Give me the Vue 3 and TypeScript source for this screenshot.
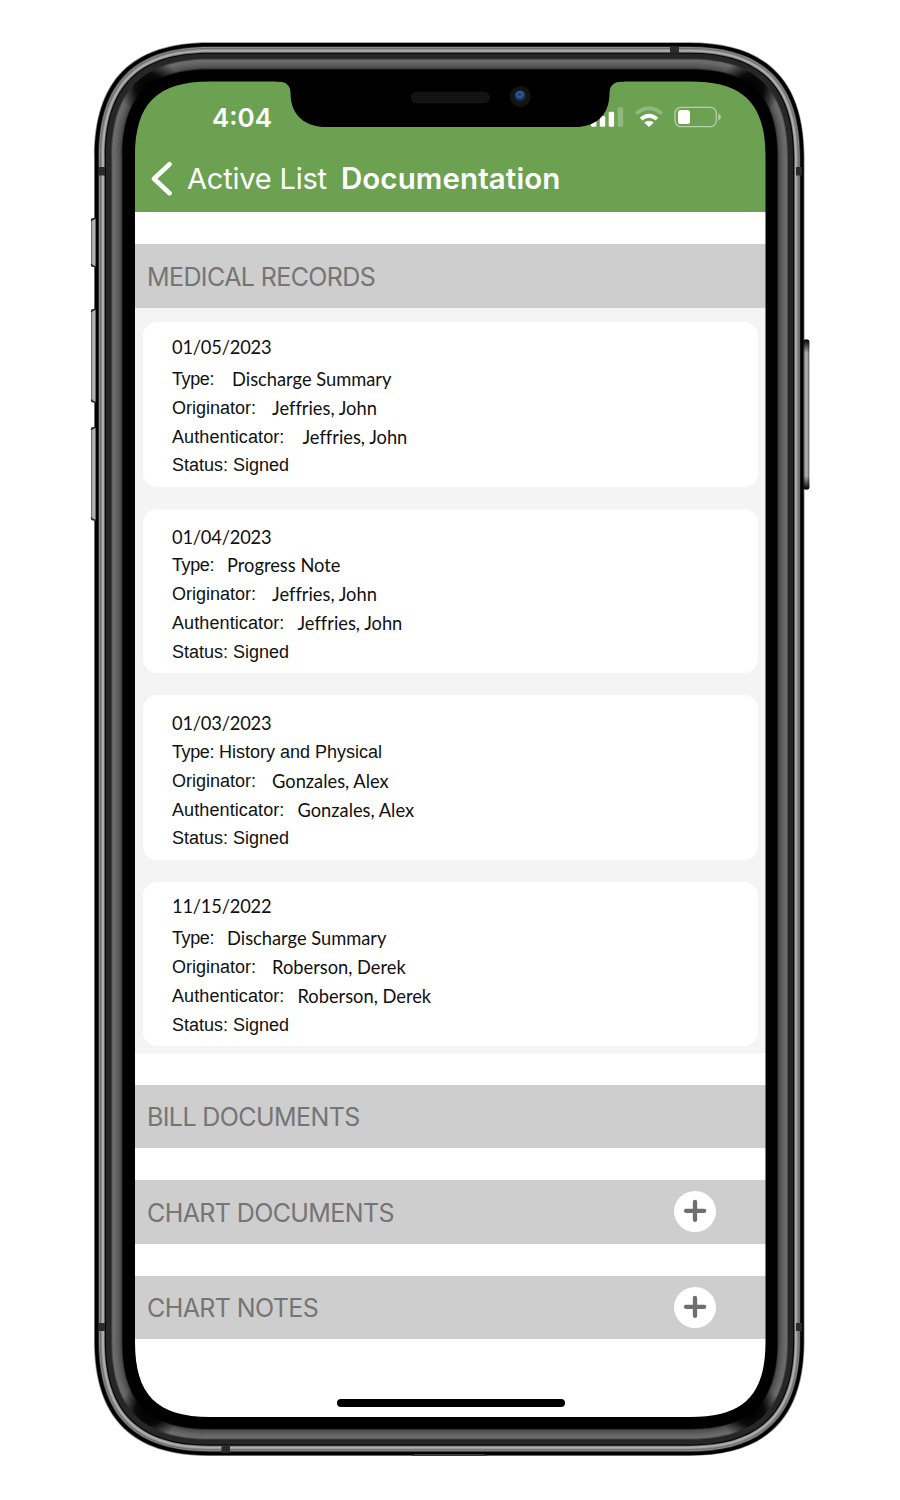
<script setup lang="ts">
interface Doc {
  date: string
  shift: string
  type: string
  typeClass: string
  person: string
  authClass: string
}

const docs: Doc[] = [
  { date: '01/05/2023', shift: 'd0', type: 'Discharge Summary', typeClass: 'wide', person: 'Jeffries, John', authClass: 'wide' },
  { date: '01/04/2023', shift: 'd1', type: 'Progress Note', typeClass: 'mid', person: 'Jeffries, John', authClass: 'mid' },
  { date: '01/03/2023', shift: 'd1', type: 'History and Physical', typeClass: 'plain', person: 'Gonzales, Alex', authClass: 'mid' },
  { date: '11/15/2022', shift: 'd2', type: 'Discharge Summary', typeClass: 'mid', person: 'Roberson, Derek', authClass: 'mid' },
]

// Continuous-corner outline of the phone body, inset by a distance from its edge
function outline(inset: number): string {
  const t = inset / 41
  const l = 94 + inset
  const r = 804.5 - inset + t * 2
  const top = 42.3 + inset * (39.2 / 41)
  const b = 1456 - inset * (39 / 41)
  const a = 115 - 40 * t
  const c = 37.7 - 15.7 * t
  return `M${l} ${top + a}C${l} ${top + c} ${l + c} ${top} ${l + a} ${top}H${r - a}C${r - c} ${top} ${r} ${top + c} ${r} ${top + a}V${b - a}C${r} ${b - c} ${r - c} ${b} ${r - a} ${b}H${l + a}C${l + c} ${b} ${l} ${b - c} ${l} ${b - a}Z`
}

const hole = outline(41)
const layers: [number, string][] = [
  [0, '#8a8a8a'], [0.8, '#000'], [4.2, '#2e2e2e'], [5, '#8a8a8a'], [6, '#6e6e6e'], [7, '#8c8c8c'],
  [8, '#adadad'], [10, '#777'], [10.8, '#060606'], [12, '#262626'], [17.3, '#4a4a4a'], [18.3, '#6c6c6c'],
  [20, '#686868'], [22, '#606060'], [24, '#565656'], [26, '#4a4a4a'], [27.5, '#303030'], [28.4, '#000'],
]
// Each band reaches slightly under the next one so that no seam shows between them
const rings = layers.map(([inset, fill], i) => {
  const next = layers[i + 1]
  return { d: outline(inset) + (next ? outline(next[0] + 1) : hole), fill }
})
const corners = [
  [149, 87], [751, 87], [149, 1412], [751, 1412],
]
</script>

<template>
  <div class="page">
    <div class="screen">
      <header class="top">
        <div class="status">
          <span class="time">4:04</span>
          <svg class="signals" width="136" height="24" viewBox="588 105 136 24">
            <g fill="#fff">
              <rect x="591" y="119" width="5.4" height="7.8" rx="1.4" />
              <rect x="599.8" y="116" width="5.4" height="10.8" rx="1.4" />
              <rect x="608.7" y="111.7" width="5.4" height="15.1" rx="1.4" />
              <rect x="617.7" y="107.3" width="5.4" height="19.5" rx="1.4" opacity=".25" />
              <path d="M649 127l-4.800-4.400q4.800-3.800 9.600 0z" />
              <rect x="678" y="110" width="12" height="14" rx="2.6" />
            </g>
            <g fill="none" stroke="#fff">
              <path d="M641 119q8-6.600 16 0" stroke-width="3.8" />
              <path d="M636.2 113.6q12.8-10.6 25.6 0" stroke-width="3.8" opacity=".25" />
              <rect x="675" y="107.3" width="41.3" height="19.4" rx="6" stroke-width="1.3" opacity=".5" />
            </g>
            <path d="M718.3 113.8q2.6 1 2.6 3.3t-2.6 3.3z" fill="#fff" opacity=".5" />
          </svg>
        </div>
        <nav class="nav">
          <svg class="back" width="24" height="36" viewBox="0 0 24 36" fill="none" stroke="#fff" stroke-width="4.6" stroke-linecap="round" stroke-linejoin="round">
            <path d="M20.500 4.300L5 18.700l15.500 14.500" />
          </svg>
          <span class="prev">Active List</span>
          <h1>Documentation</h1>
        </nav>
      </header>

      <h2 class="bar"><span>MEDICAL RECORDS</span></h2>
      <div class="list">
        <article v-for="d in docs" :key="d.date" class="card">
          <div class="date" :class="d.shift">{{ d.date }}</div>
          <div class="row"><span class="lab-type">Type:</span><span class="val" :class="d.typeClass">{{ d.type }}</span></div>
          <div class="row"><span>Originator:</span><span class="val">{{ d.person }}</span></div>
          <div class="row"><span class="lab-auth">Authenticator:</span><span class="val" :class="d.authClass">{{ d.person }}</span></div>
          <div class="row">Status: Signed</div>
        </article>
      </div>
      <h2 class="bar"><span>BILL DOCUMENTS</span></h2>
      <h2 v-for="s in ['CHART DOCUMENTS', 'CHART NOTES']" :key="s" class="bar">
        <span>{{ s }}</span>
        <button class="add" :aria-label="'Add ' + s">
          <svg width="42" height="41" viewBox="0 0 42 41">
            <ellipse cx="21" cy="20.500" rx="21" ry="20.500" fill="#fff" />
            <path d="M12 19.800H30.200M21 11V28.900" stroke="#6e6e6e" stroke-width="4.300" stroke-linecap="round" />
          </svg>
        </button>
      </h2>
      <div class="home"></div>
    </div>

    <svg class="frame" width="900" height="1500" viewBox="0 0 900 1500">
      <defs>
        <linearGradient id="btnL"><stop offset="0" stop-color="#555" /><stop offset=".3" stop-color="#aaa" /><stop offset=".75" stop-color="#b4b4b4" /><stop offset="1" stop-color="#333" /></linearGradient>
        <linearGradient id="btnR"><stop offset="0" stop-color="#222" /><stop offset=".25" stop-color="#999" /><stop offset=".6" stop-color="#b5b5b5" /><stop offset="1" stop-color="#555" /></linearGradient>
        <linearGradient id="ends" x2="0" y2="1"><stop offset="0" stop-color="#000" /><stop offset=".09" stop-color="#000" stop-opacity="0" /><stop offset=".91" stop-color="#000" stop-opacity="0" /><stop offset="1" stop-color="#000" /></linearGradient>
        <radialGradient id="shade"><stop offset="0" stop-color="#000" /><stop offset=".45" stop-color="#000" stop-opacity=".9" /><stop offset="1" stop-color="#000" stop-opacity="0" /></radialGradient>
        <radialGradient id="lens" cx=".45" cy=".35"><stop offset="0" stop-color="#12315c" /><stop offset=".55" stop-color="#2a5f9e" /><stop offset="1" stop-color="#14243c" /></radialGradient>
        <pattern id="mesh" width="2" height="2" patternUnits="userSpaceOnUse"><rect width="2" height="2" fill="#101010" /><rect width="1" height="1" fill="#1d1d1d" /></pattern>
        <clipPath id="ringClip"><path :d="outline(17.5) + outline(39)" clip-rule="evenodd" /></clipPath>
      </defs>
      <path v-for="(r, i) in rings" :key="i" :d="r.d" :fill="r.fill" fill-rule="evenodd" />
      <g fill="url(#btnL)">
        <rect x="91" y="218" width="5" height="49" rx="1.500" />
        <rect x="91" y="309" width="5" height="93.500" rx="1.500" />
        <rect x="91" y="427" width="5" height="93.500" rx="1.500" />
      </g>
      <rect x="803.300" y="339.500" width="6" height="150" rx="2" fill="url(#btnR)" />
      <rect x="803.300" y="339.500" width="6" height="150" rx="2" fill="url(#ends)" />
      <path d="M91.500 221q0-2.500 4-2.500M91.500 264q0 2.500 4 2.500M91.500 312q0-2.500 4-2.500M91.500 399.500q0 2.500 4 2.500M91.500 430q0-2.500 4-2.500M91.500 517.500q0 2.500 4 2.500" fill="none" stroke="#222" stroke-width="1.500" />
      <g clip-path="url(#ringClip)">
        <circle v-for="(c, i) in corners" :key="i" :cx="c[0]" :cy="c[1]" r="30" fill="url(#shade)" />
      </g>
      <g fill="#2b2b2b">
        <rect x="99" y="167" width="6" height="8.500" />
        <rect x="796" y="167" width="6" height="8.500" />
        <rect x="99" y="1323" width="6" height="8" />
        <rect x="796" y="1323" width="6" height="8" />
        <rect x="670" y="46.500" width="9" height="7" />
        <rect x="221.500" y="1445.300" width="8.500" height="7.700" />
      </g>
      <path d="M411.500 1456q1.500-2 4-2h68q2.500 0 4 2z" fill="#3a3a3a" />
      <path d="M276 80.500V81.500Q290.500 81 290.500 93C290.500 117 307 127 326 127H575C594 127 609.500 117 609.500 93Q609.500 81 624 81.500V80.500Z" fill="#000" />
      <rect x="410.700" y="91.700" width="79" height="11.600" rx="5.800" fill="url(#mesh)" />
      <circle cx="520.300" cy="96.500" r="10.500" fill="#131313" />
      <circle cx="520.300" cy="96.200" r="5.600" fill="url(#lens)" />
    </svg>
  </div>
</template>

<style>
body { margin: 0; background: #fff; }
</style>

<style scoped>
.page { position: relative; width: 900px; height: 1500px; box-sizing: border-box; padding: 81px 134px 0; background: #fff; overflow: hidden; }
.frame { position: absolute; left: 0; top: 0; pointer-events: none; }
.screen { display: flex; flex-direction: column; width: 632px; height: 1336px; padding: 0; font-family: Inter, "Liberation Sans", sans-serif; background: #fff; border-radius: 40px; overflow: hidden; }
.top { height: 131px; flex: none; background: #6da152; color: #fff; box-sizing: border-box; padding-top: 24px; }
.status { display: flex; justify-content: space-between; height: 24px; padding: 0 42px 0 78px; align-items: center; }
.time { font-size: 26px; font-weight: 600; line-height: 26px; padding-top: 2px; letter-spacing: 0; }
.signals { display: block; }
.nav { display: flex; align-items: center; height: 36px; margin-top: 31px; padding-left: 15px; white-space: nowrap; }
.back { flex: none; }
.prev { font-size: 29px; margin-left: 14px; letter-spacing: -0.2px; }
h1 { margin: 0 0 0 14px; font-size: 29.500px; font-weight: 600; letter-spacing: 0.100px; }
.bar { display: flex; align-items: center; justify-content: space-between; flex: none; height: 63.500px; margin: 32px 0 0; padding: 0 50px 0 13px; box-sizing: border-box; background: #cecece; color: #757575; font-size: 25px; font-weight: 400; letter-spacing: -0.600px; }
.bar span { padding-top: 2px; }
.list { flex: none; height: 745px; box-sizing: border-box; padding: 14.500px 8px 0 9px; background: #f4f4f4; display: flex; flex-direction: column; gap: 22px; }
.card { height: 164.500px; box-sizing: border-box; padding: 42.800px 0 0 29px; background: #fff; border-radius: 14px; color: #111; font-family: "Liberation Sans", sans-serif; font-size: 18px; }
.row { display: flex; height: 28.900px; line-height: 28.900px; white-space: nowrap; }
.date, .val { font-family: Lato, sans-serif; font-size: 18.300px; font-variant-ligatures: none; }
.date { height: 28px; line-height: 28px; margin-top: -28px; letter-spacing: -0.200px; }
.d0 { position: relative; top: -3.500px; }
.d1 { position: relative; top: -0.500px; }
.d2 { position: relative; top: -4.500px; }
.lab-type { letter-spacing: -0.400px; }
.lab-auth { letter-spacing: 0.100px; }
.val { margin-left: 16px; }
.val.mid { margin-left: 13px; }
.val.wide { margin-left: 18px; }
.val.plain { margin-left: 5px; font-family: inherit; font-size: inherit; }
.add { display: block; padding: 0; border: 0; background: none; }
.add svg { display: block; }
.home { flex: none; width: 228.500px; height: 7.500px; margin: 60px auto 0 202.500px; border-radius: 4px; background: #000; }
</style>
